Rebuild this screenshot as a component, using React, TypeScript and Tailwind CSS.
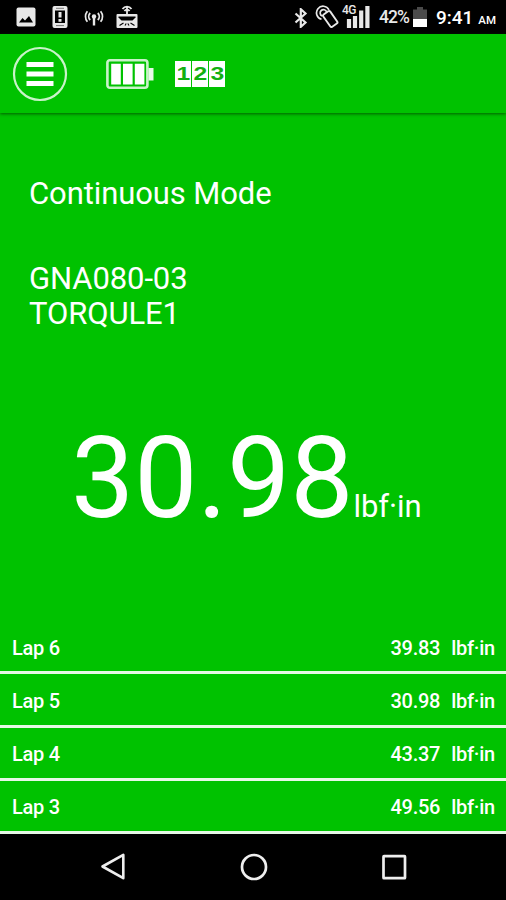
import type { ReactNode } from "react";

const laps = [
  { name: "Lap 6", value: "39.83" },
  { name: "Lap 5", value: "30.98" },
  { name: "Lap 4", value: "43.37" },
  { name: "Lap 3", value: "49.56" },
];

function Icon({ w, h, className, children }: { w: number; h: number; className?: string; children: ReactNode }) {
  return (
    <svg
      width={w}
      height={h}
      viewBox={`0 0 ${w} ${h}`}
      fill="none"
      stroke="currentColor"
      className={`shrink-0 ${className ?? ""}`}
    >
      {children}
    </svg>
  );
}

function StatusBar() {
  return (
    <div className="h-[34px] shrink-0 bg-black text-[#e8e8e8] flex items-center pl-4 pr-[10px]">
      {/* picture */}
      <Icon w={20} h={20}>
        <rect x="0.5" y="0.5" width="19" height="19" rx="2" fill="currentColor" stroke="none" />
        <path d="M3 15.5l3.5-4.5 2.5 2.5 4-4.5 4 6.5z" fill="#000" stroke="none" />
      </Icon>
      {/* phone alert */}
      <Icon w={16} h={24} className="ml-4">
        <rect x="0.5" y="1" width="15" height="22" rx="2" fill="currentColor" stroke="none" />
        <path d="M3 5.5h10v12.5H3z" fill="#000" stroke="none" />
        <path d="M4 3.3h8M4 20.6h8" stroke="#777" strokeWidth="1" />
        <path d="M8 7v5.5M8 14v2.8" strokeWidth="3" />
      </Icon>
      {/* antenna */}
      <Icon w={20} h={18} className="ml-4 mt-0.5">
        <circle cx="10" cy="7.5" r="2.2" fill="currentColor" stroke="none" />
        <path d="M10 7v9.5" strokeWidth="2.4" />
        <path d="M6.2 4a5 5 0 0 0 0 7M13.8 4a5 5 0 0 1 0 7M3.4 2.2a8.5 8.5 0 0 0 0 10.6M16.6 2.2a8.5 8.5 0 0 1 0 10.6" strokeWidth="1.8" />
      </Icon>
      {/* wireless keyboard box */}
      <Icon w={22} h={24} className="ml-[12px]">
        <rect x="0.5" y="9" width="21" height="14" rx="1" fill="currentColor" stroke="none" />
        <path d="M6.5 4a5.5 5.5 0 0 1 9 0M8.5 6.2a2.8 2.8 0 0 1 5 0M11 1v8" strokeWidth="1.8" />
        <path d="M2.5 11.5h17v1l-3 3h-11l-3-3z" fill="#000" stroke="none" />
        <path d="M3.5 20.5l4-2.5M9 20.5l1.2-2M13 20.5l-1.2-2M18.5 20.5l-4-2.5" stroke="#000" strokeWidth="1.1" />
      </Icon>

      {/* bluetooth */}
      <Icon w={14} h={20} className="ml-auto mt-px">
        <path d="M1.5 5.5l10 9-4.7 4.3V1.2l4.7 4.3-10 9" strokeWidth="2.2" />
      </Icon>
      {/* rotation */}
      <Icon w={24} h={24} className="ml-[7px]">
        <rect x="11" y="6.5" width="8.5" height="15" rx="1.5" transform="rotate(-35 15.2 14)" strokeWidth="1.9" />
        <path d="M14 4.8A6.6 6.6 0 1 0 6.5 14.2" strokeWidth="1.7" />
        <path d="M11.6 7A3.3 3.3 0 1 0 7.2 11" strokeWidth="1.7" />
      </Icon>
      {/* signal */}
      <div className="relative ml-[4px] h-6 w-[27px]">
        <Icon w={27} h={24}>
          <path d="M6 23v-9M12 23V11M18.2 23V5.5M24.4 23V1" strokeWidth="4.2" />
        </Icon>
        <span className="absolute -left-px top-0 h-[9px] bg-black text-[12px] leading-[10px] font-medium tracking-[-0.5px]">4G</span>
      </div>
      <span className="ml-[9px] w-[33px] text-[17.5px] font-medium tracking-[-0.9px] pt-px">42%</span>
      {/* battery */}
      <Icon w={14} h={20} className="ml-px">
        <path d="M0 2.5h4V0h6v2.5h4V20H0z" fill="#4a4a4a" stroke="none" />
        <path d="M0 12h14v8H0z" fill="#fff" stroke="none" />
      </Icon>
      <span className="ml-[9px] text-[19px] font-medium text-white pt-[3px]">9:41</span>
      <span className="ml-[5px] text-[11.5px] font-medium text-white pt-2">AM</span>
    </div>
  );
}

function Header() {
  return (
    <header className="relative h-[79px] shrink-0 flex items-center pl-3 shadow-[0_1px_3px_rgba(0,60,0,0.75)]">
      <button className="block" aria-label="Menu">
        <Icon w={56} h={56}>
          <circle cx="28" cy="28" r="26" strokeWidth="2.2" stroke="#c9f3c9" />
          <path d="M14.5 18.5h27M14.5 28h27M14.5 37.5h27" strokeWidth="4.8" />
        </Icon>
      </button>
      {/* battery */}
      <Icon w={48} h={32} className="ml-[38px]">
        <rect x="1.4" y="2.2" width="40" height="27.6" rx="2.5" strokeWidth="2.6" stroke="#c9f3c9" />
        <path d="M42.5 10h5v12.5h-5z" fill="#e6fae6" stroke="none" />
        <path d="M5.2 5.7h9.6v20.8H5.2zM17 5.7h9.6v20.8H17zM28.8 5.7h9.6v20.8h-9.6z" fill="#fff" stroke="none" />
      </Icon>
      <div className="ml-[21px] flex gap-px font-['Liberation_Sans',sans-serif] font-bold text-[19px] text-[#12b012]">
        {["1", "2", "3"].map((n) => (
          <span key={n} className="flex h-[26px] w-4 items-center justify-center bg-white pt-px">
            <span className="scale-x-[1.3]">{n}</span>
          </span>
        ))}
      </div>
    </header>
  );
}

export default function App() {
  return (
    <div className="h-[900px] w-[506px] flex flex-col overflow-hidden bg-[#00c200] text-white font-[Roboto,sans-serif]">
      <StatusBar />
      <Header />

      <main className="flex-1 pl-[29px] text-[31px] leading-[35px]">
        <h1 className="pt-[63px] tracking-[-0.1px]">Continuous Mode</h1>
        <div className="pt-[50px] tracking-[-0.1px]">
          <p>GNA080-03</p>
          <p>TORQULE1</p>
        </div>
        <div className="flex items-baseline pl-[42px] pt-[82px]">
          <span className="text-[112.5px] leading-[132px]">30.98</span>
          <span className="tracking-[-0.1px]">lbf·in</span>
        </div>
      </main>

      <ul className="h-[213px] shrink-0 flex flex-col text-[20px] leading-6 font-medium tracking-[-0.25px]">
        {laps.map((lap) => (
          <li key={lap.name} className="flex flex-1 items-center border-b-3 border-[#e6f8e6] pl-3 pr-[11px] pt-[3px]">
            <span>{lap.name}</span>
            <span className="ml-auto">{lap.value}</span>
            <span className="ml-[11px]">lbf·in</span>
          </li>
        ))}
      </ul>

      <nav className="h-[66px] shrink-0 bg-black flex items-center justify-between pl-[99px] pr-[98px] text-[#eee]">
        <Icon w={28} h={30}>
          <path d="M3.5 14.5L24.3 2.8v23.4z" strokeWidth="2.6" strokeLinejoin="round" />
        </Icon>
        <Icon w={28} h={28}>
          <circle cx="14" cy="14" r="12" strokeWidth="2.7" />
        </Icon>
        <Icon w={28} h={28}>
          <rect x="3.5" y="3.2" width="21.5" height="22" rx="0.5" strokeWidth="2.7" />
        </Icon>
      </nav>
    </div>
  );
}
